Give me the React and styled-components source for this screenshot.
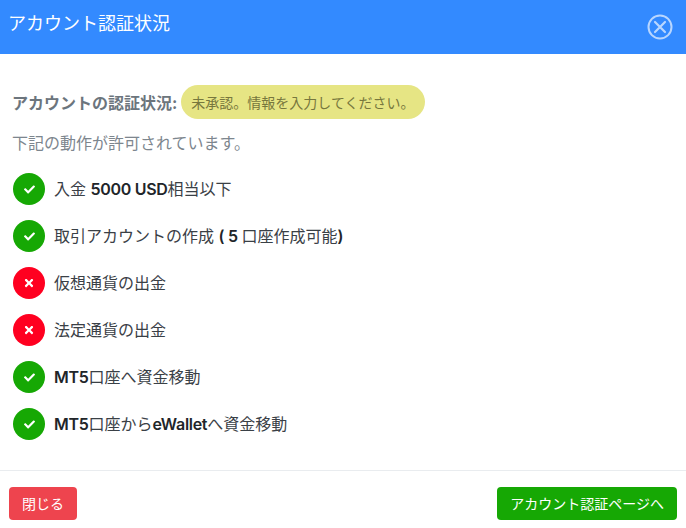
import React from "react";
import styled, { createGlobalStyle } from "styled-components";
import { FaCheck, FaTimes } from "react-icons/fa";

const Global = createGlobalStyle`
  html, body { margin: 0; padding: 0; background: #fff; }
  body { font-family: Inter, "Noto Sans CJK JP", sans-serif; }
`;

const Modal = styled.div`
  width: 686px;
  height: 528px;
  display: flex;
  flex-direction: column;
  background: #fff;
  overflow: hidden;
`;
const Header = styled.header`
  height: 54px;
  flex: none;
  box-sizing: border-box;
  background: #338aff;
  display: flex;
  justify-content: space-between;
  align-items: flex-start;
  padding: 11px 13px 0 8px;
`;
const Title = styled.h2`
  margin: 0;
  font-size: 18px;
  line-height: 26px;
  font-weight: 400;
  color: #fff;
`;
const CloseIcon = styled.svg`
  width: 26px;
  height: 26px;
  margin-top: 3px;
  display: block;
`;
const Body = styled.main`
  flex: 1;
  padding: 31px 13px 0 12px;
`;
const StatusLine = styled.div`
  display: flex;
  align-items: center;
  height: 34px;
  gap: 4px;
`;
const StatusLabel = styled.strong`
  font-size: 16px;
  font-weight: 700;
  color: #6c757d;
`;
const Pill = styled.span`
  display: flex;
  align-items: center;
  height: 34px;
  box-sizing: border-box;
  padding: 0 10px;
  border-radius: 17px;
  background: #e6e584;
  color: #77773d;
  font-size: 14px;
`;
const Note = styled.p`
  margin: 12px 0 0;
  font-size: 16px;
  line-height: 24px;
  color: #7d868e;
`;
const List = styled.ul`
  list-style: none;
  margin: 18px 0 0 1px;
  padding: 0;
  display: flex;
  flex-direction: column;
  gap: 15px;
`;
const Item = styled.li`
  display: flex;
  align-items: center;
  gap: 9px;
  height: 32px;
  font-size: 16px;
  color: #3a4046;
`;
const ItemText = styled.span`
  padding-bottom: 3px;
`;
const Badge = styled.span`
  width: 32px;
  height: 32px;
  flex: none;
  border-radius: 50%;
  background: ${(p) => (p.$ok ? "#16a804" : "#ff0020")};
  color: #fff;
  display: flex;
  align-items: center;
  justify-content: center;
`;
const Strong = styled.b`
  font-weight: 600;
  letter-spacing: -0.3px;
  color: #212529;
`;
const Footer = styled.footer`
  height: 58px;
  flex: none;
  box-sizing: border-box;
  border-top: 1px solid #e9ecef;
  display: flex;
  justify-content: space-between;
  padding: 16px 9px 0;
`;
const Button = styled.button`
  height: 33px;
  box-sizing: border-box;
  padding: 0 13px;
  border: none;
  border-radius: 4px;
  background: ${(p) => (p.$variant === "danger" ? "#ee444e" : "#16a804")};
  color: #fff;
  font-family: inherit;
  font-size: 14px;
  line-height: 33px;
`;

const Mark = ({ ok }) => (
  <Badge $ok={ok}>{ok ? <FaCheck size={11} /> : <FaTimes size={12} />}</Badge>
);

const items = [
  { ok: true, text: <>入金 <Strong>5000 USD</Strong>相当以下</> },
  { ok: true, text: <>取引アカウントの作成 <Strong>( 5 </Strong>口座作成可能<Strong>)</Strong></> },
  { ok: false, text: "仮想通貨の出金" },
  { ok: false, text: "法定通貨の出金" },
  { ok: true, text: <><Strong>MT5</Strong>口座へ資金移動</> },
  { ok: true, text: <><Strong>MT5</Strong>口座から<Strong>eWallet</Strong>へ資金移動</> },
];

export default function App() {
  return (
    <Modal>
      <Global />
      <Header>
        <Title>アカウント認証状況</Title>
        <CloseIcon viewBox="0 0 26 26" aria-hidden="true">
          <circle cx="13" cy="13" r="11.5" fill="none" stroke="#b8d6ff" strokeWidth="2" />
          <path d="M8 8 18 18M18 8 8 18" fill="none" stroke="#b8d6ff" strokeWidth="2.2" strokeLinecap="round" />
        </CloseIcon>
      </Header>
      <Body>
        <StatusLine>
          <StatusLabel>アカウントの認証状況:</StatusLabel>
          <Pill>未承認。情報を入力してください。</Pill>
        </StatusLine>
        <Note>下記の動作が許可されています。</Note>
        <List>
          {items.map((item, i) => (
            <Item key={i}>
              <Mark ok={item.ok} />
              <ItemText>{item.text}</ItemText>
            </Item>
          ))}
        </List>
      </Body>
      <Footer>
        <Button $variant="danger">閉じる</Button>
        <Button>アカウント認証ページへ</Button>
      </Footer>
    </Modal>
  );
}
